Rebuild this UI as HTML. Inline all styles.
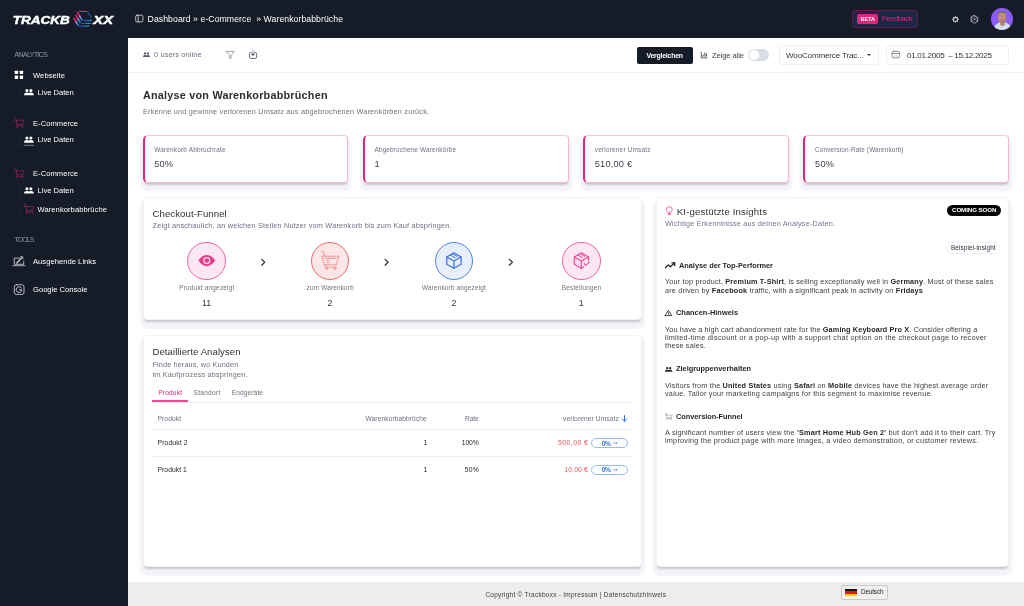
<!DOCTYPE html>
<html lang="de">
<head>
<meta charset="utf-8">
<title>Trackboxx</title>
<style>
*{box-sizing:border-box;margin:0;padding:0}
html,body{width:1024px;height:606px;overflow:hidden;background:#fff;font-family:"Liberation Sans",sans-serif;color:#2b2f3a}
body{position:relative}
.a{position:absolute}
.t{position:absolute;white-space:pre;line-height:1}
.t b{font-weight:700;color:#1f2329}
#top{left:0;top:0;width:1024px;height:38px;background:#161b28}
#side{left:0;top:0;width:127.5px;height:606px;background:#161b28}
#toolbar{left:127.5px;top:38px;width:896.5px;height:35px;background:#fff;border-bottom:1px solid #f0f2f5}
#footer{left:127.5px;top:582px;width:896.5px;height:24px;background:#ededed}
.stat{top:135px;width:205.75px;height:47.6px;background:#fff;border:1px solid #f8b3d3;border-top-color:#fac6de;border-left:2.5px solid #e0267a;border-radius:5px 4px 4px 5px;box-shadow:0 2.2px 2.2px -1px rgba(15,23,42,.2),0 5.5px 2px 2.4px rgba(230,234,241,.52)}
.card{background:#fff;border:1px solid #f1f3f6;border-radius:4.5px;box-shadow:0 2.2px 2.2px -1px rgba(15,23,42,.2),0 5.5px 2px 2.6px rgba(230,234,241,.52)}
.circ{width:38.4px;height:38.4px;border-radius:50%;top:241.75px}
.hl{height:1px;background:#e9ecf0}
.box{border:1px solid #eef0f4;border-radius:2.5px;background:#fff;top:45px;height:19.5px}
svg{position:absolute;overflow:visible}
</style>
</head>
<body>
<div id="root" style="position:absolute;left:0;top:0;width:1024px;height:606px;will-change:transform">
<div class="a" id="top"></div>
<div class="a" id="side"></div>
<div class="a" id="toolbar"></div>
<div class="a" id="footer"></div>

<!-- top bar widgets -->
<div class="a" style="left:852.25px;top:10px;width:65.75px;height:17.5px;border:1px solid #5c1d4a;border-radius:2.5px;background:#1d2644"></div>
<div class="a" style="left:857.3px;top:14px;width:20.7px;height:9.8px;border-radius:2px;background:#e0267a"></div>
<div class="a" style="left:991.4px;top:8.1px;width:21.6px;height:21.6px;border-radius:50%;background:#8b5cf6;overflow:hidden">
  <div class="a" style="left:2.2px;top:14.4px;width:17.4px;height:12px;border-radius:50% 50% 0 0/60% 60% 0 0;background:#d3deee"></div>
  <div class="a" style="left:8.6px;top:12px;width:4.6px;height:6px;background:#b98670;border-radius:0 0 50% 50%"></div>
  <div class="a" style="left:6.7px;top:3.4px;width:8.4px;height:5px;border-radius:50% 50% 20% 20%;background:#7d6f68"></div>
  <div class="a" style="left:7px;top:5.1px;width:7.8px;height:10px;border-radius:40% 40% 48% 48%;background:#c48e78"></div>
  <div class="a" style="left:8.2px;top:11.4px;width:5.4px;height:3.4px;border-radius:40%;background:#a9796a;opacity:.7"></div>
</div>

<!-- toolbar widgets -->
<div class="a" style="left:636.75px;top:46.5px;width:56.25px;height:17px;border-radius:2px;background:#161b28"></div>
<div class="a" style="left:748px;top:49px;width:21px;height:11.75px;border-radius:6px;background:#d9dde5"></div>
<div class="a" style="left:749px;top:50px;width:9.75px;height:9.75px;border-radius:50%;background:#fff"></div>
<div class="a box" style="left:778.5px;width:100.25px"></div>
<div class="a box" style="left:886px;width:122.75px"></div>
<div class="a" style="left:866.5px;top:53.9px;width:0;height:0;border-left:2.35px solid transparent;border-right:2.35px solid transparent;border-top:2.8px solid #30343c"></div>

<!-- stat cards -->
<div class="a stat" style="left:142.5px"></div>
<div class="a stat" style="left:362.75px"></div>
<div class="a stat" style="left:583px;"></div>
<div class="a stat" style="left:803.25px"></div>

<!-- big cards -->
<div class="a card" style="left:143px;top:197px;width:498.75px;height:123px"></div>
<div class="a card" style="left:143px;top:335px;width:498.75px;height:232px"></div>
<div class="a card" style="left:656.4px;top:197px;width:352.6px;height:370px"></div>

<!-- funnel circles -->
<div class="a circ" style="left:187.3px;background:#fce7f3;border:1.35px solid #f062a8"></div>
<div class="a circ" style="left:311px;background:#fde6e7;border:1.35px solid #ec6b6b"></div>
<div class="a circ" style="left:435px;background:#e8effc;border:1.35px solid #4f82ea"></div>
<div class="a circ" style="left:562.25px;background:#fce7f3;border:1.35px solid #f062a8"></div>

<!-- table lines -->
<div class="a hl" style="left:152.5px;top:402px;width:479.25px"></div>
<div class="a" style="left:152px;top:400px;width:36px;height:2px;background:#ea4a94"></div>
<div class="a hl" style="left:152.5px;top:429px;width:479.25px"></div>
<div class="a hl" style="left:152.5px;top:456px;width:479.25px"></div>
<div class="a" style="left:591px;top:438px;width:36.5px;height:10.4px;border:1px solid #94bdf2;border-radius:5.5px;background:#fdfeff"></div>
<div class="a" style="left:591px;top:465px;width:36.5px;height:10.4px;border:1px solid #94bdf2;border-radius:5.5px;background:#fdfeff"></div>

<!-- insights badges -->
<div class="a" style="left:947.25px;top:205px;width:53.75px;height:10.75px;border-radius:5.5px;background:#050505"></div>
<div class="a" style="left:946.4px;top:242px;width:54.3px;height:11.5px;border-radius:6px;border:1px solid #edf0f4;background:#fff"></div>

<!-- footer language -->
<div class="a" style="left:841.25px;top:585px;width:46.25px;height:14.5px;border:1px solid #c9c9c9;border-radius:2px;background:#f1f1f1"></div>
<div class="a" style="left:845.25px;top:588.75px;width:11.5px;height:7.25px;background:linear-gradient(#111 0 33.3%,#dd1c1c 33.3% 66.6%,#ffce00 66.6% 100%)"></div>

<!-- sidebar tree lines -->
<div class="a" style="left:18.5px;top:85px;width:1px;height:14px;background:#1b2131"></div>
<div class="a" style="left:18.5px;top:133px;width:1px;height:14px;background:#1b2131"></div>
<div class="a" style="left:18.5px;top:183px;width:1px;height:34px;background:#1b2131"></div>

<svg width="1024" height="606" viewBox="0 0 1024 606" style="left:0;top:0" fill="none" stroke-linecap="round" stroke-linejoin="round">
<defs>
  <linearGradient id="gs" x1="0" y1="0" x2="0.5" y2="1"><stop offset="0" stop-color="#ec1f80"/><stop offset=".45" stop-color="#e0267a"/><stop offset=".62" stop-color="#b9a3c7"/><stop offset="1" stop-color="#1d7fd6"/></linearGradient>
  <linearGradient id="gh" x1="0" y1="0" x2="1" y2="0"><stop offset="0" stop-color="#1b3f86"/><stop offset=".6" stop-color="#1f6fc9"/><stop offset="1" stop-color="#19a7ee"/></linearGradient>
  <g id="ppl"><circle cx="2.9" cy="1.55" r="1.55"/><circle cx="6.9" cy="1.55" r="1.55"/><path d="M0,6.3 C0,4.4 1.2,3.7 2.9,3.7 C4.1,3.7 4.7,4 4.9,4.3 C5.2,4 5.7,3.7 6.9,3.7 C8.6,3.7 9.8,4.4 9.8,6.3 Z"/></g>
  <g id="cart"><path d="M0.1,0.5 H1.6 L2.4,3 M0.5,3 H10.1 L8.7,7 H2.7 L2.4,3 M3.1,7 L2.4,10.3 M8.3,7 L8.9,10.3 M2.8,8.7 H8.6"/></g>
</defs>
<!-- logo cube -->
<g stroke-linecap="butt">
<line x1="78.9" y1="11.4" x2="86.9" y2="11.4" stroke="#e0267a" stroke-width="1.2"/>
<line x1="87.3" y1="11.5" x2="91.4" y2="17.6" stroke="#1f5cab" stroke-width="1.1"/>
<line x1="77.2" y1="12" x2="82.4" y2="20.6" stroke="url(#gs)" stroke-width="1.6"/>
<line x1="75.5" y1="14.8" x2="80.4" y2="22.9" stroke="url(#gs)" stroke-width="1.6"/>
<line x1="73.8" y1="17.8" x2="78.6" y2="26" stroke="url(#gs)" stroke-width="1.6"/>
<line x1="82.6" y1="20.4" x2="91.8" y2="20.401" stroke="url(#gh)" stroke-width="1.3"/>
<line x1="80.6" y1="23.3" x2="90.7" y2="23.301" stroke="url(#gh)" stroke-width="1.2"/>
<line x1="78.7" y1="26.2" x2="89" y2="26.201" stroke="url(#gh)" stroke-width="1.2"/>
</g>
<text x="12.7" y="23.8" fill="#fff" stroke="#fff" stroke-width=".45" font-family="'Liberation Sans',sans-serif" font-weight="700" font-style="italic" font-size="10.6" textLength="57" lengthAdjust="spacingAndGlyphs">TRACKB</text>
<text x="93.3" y="23.8" fill="#fff" stroke="#fff" stroke-width=".45" font-family="'Liberation Sans',sans-serif" font-weight="700" font-style="italic" font-size="10.6" textLength="19.7" lengthAdjust="spacingAndGlyphs">XX</text>

<!-- sidebar icons -->
<g fill="#fff" stroke="none">
<rect x="14.7" y="70.8" width="3.4" height="3.3" rx=".4"/><rect x="19.75" y="70.8" width="3.4" height="3.3" rx=".4"/>
<rect x="14.7" y="75.6" width="3.4" height="3.3" rx=".4"/><rect x="19.75" y="75.6" width="3.4" height="3.3" rx=".4"/>
<use href="#ppl" x="24" y="88.9"/><use href="#ppl" x="24" y="136.4"/><use href="#ppl" x="24" y="187.2"/>
</g>
<line x1="24" y1="145.3" x2="33.7" y2="145.3" stroke="#9197a5" stroke-width=".8"/>
<use href="#cart" x="14" y="117.3" stroke="#85215b" stroke-width=".75"/>
<use href="#cart" x="14" y="167.8" stroke="#85215b" stroke-width=".75"/>
<use href="#cart" x="23.8" y="203.6" stroke="#8f2463" stroke-width=".75" transform="translate(0,0)"/>
<!-- ausgehende links -->
<g stroke="#bfc3cd" stroke-width=".9">
<path d="M19.6,258.1 H14.3 V264.3 H23.7 V261.2"/><path d="M12.8,265.7 H24.9"/>
<path d="M16.8,263 L21.6,257.9" stroke-width="1.35" stroke="#cfd2da"/><path d="M20.6,256.7 H22.8 V258.9" stroke-width=".8" stroke="#d8dbe2"/>
</g>
<!-- google console -->
<rect x="14.3" y="284.7" width="9.7" height="9.8" rx="2.2" stroke="#bfc3cd" stroke-width=".9"/>
<path d="M21.4,287.9 A2.9,2.9 0 1 0 21.95,289.9 H19.3" stroke="#c9ccd5" stroke-width=".95"/>

<!-- topbar icons -->
<rect x="135.7" y="15.2" width="7.2" height="6.7" rx="1.2" stroke="#dfe2e8" stroke-width=".8"/>
<line x1="138.2" y1="15.3" x2="138.2" y2="21.8" stroke="#dfe2e8" stroke-width=".8"/>
<polygon points="955.50,15.70 956.40,17.23 958.12,16.78 957.67,18.50 959.20,19.40 957.67,20.30 958.12,22.02 956.40,21.57 955.50,23.10 954.60,21.57 952.88,22.02 953.33,20.30 951.80,19.40 953.33,18.50 952.88,16.78 954.60,17.23" fill="#d4d7de" stroke="none"/>
<circle cx="955.5" cy="19.4" r="1.5" fill="#161b28" stroke="none"/>
<g stroke="#cfd3db" stroke-width=".8">
<path d="M974.4,15.6 L977.7,17.5 V21.3 L974.4,23.2 L971.1,21.3 V17.5 Z"/>
<path d="M974.4,15.6 V19.4 L977.7,21.3 M974.4,19.4 L971.1,21.3 M971.1,17.5 L974.4,19.4 L977.7,17.5" stroke-width=".5" opacity=".8"/>
</g>

<!-- toolbar icons -->
<use href="#ppl" fill="#565c6c" stroke="none" transform="translate(143,52.2) scale(.71,.78)"/>
<path d="M226.2,51.4 H234.2 L231.2,55.2 V58.2 H229.4 V55.2 Z" stroke="#93969e" stroke-width=".85"/>
<g stroke="#555b69" stroke-width=".85"><path d="M251.2,52.4 H250.9 A1.5,1.5 0 0 0 249.4,53.9 V57 A1.5,1.5 0 0 0 250.9,58.5 H255.1 A1.5,1.5 0 0 0 256.6,57 V53.9 A1.5,1.5 0 0 0 255.1,52.4 H254.8"/>
<path d="M253,49.9 V54.6" stroke="#8b94a6"/><path d="M251.6,54.2 L253,55.7 L254.4,54.2 Z" fill="#3d4250" stroke="#3d4250" stroke-width=".5"/></g>
<g stroke="#4a4f5b" stroke-width=".9" stroke-linecap="butt"><path d="M701.3,51.8 V57.9 H707.2"/><path d="M703.1,54.6 V56.6 M704.9,52.6 V56.6 M706.6,53.6 V56.6" stroke-width="1"/></g>
<g stroke="#7a808d" stroke-width=".85"><rect x="892" y="51.3" width="7.6" height="6.6" rx="1.5"/><path d="M892,53.5 H899.6"/><path d="M894.9,55 V56.9 M896.8,55 V56.9" stroke-width=".6" opacity=".75"/></g>

<!-- funnel icons -->
<path d="M198.3,260.6 C201,256.6 204,255.1 206.8,255.1 C209.6,255.1 212.6,256.6 215.3,260.6 C212.6,264.7 209.6,266.2 206.8,266.2 C204,266.2 201,264.7 198.3,260.6 Z" fill="#e83e8c" stroke="none"/>
<circle cx="206.8" cy="260.6" r="2.95" stroke="#fde6f2" stroke-width="1.15" fill="#e83e8c"/>
<g stroke="#2a2d33" stroke-width="1.25"><path d="M261.6,259.4 L264.7,262.3 L261.6,265.2"/><path d="M385.1,259.4 L388.2,262.3 L385.1,265.2"/><path d="M509.3,259.4 L512.4,262.3 L509.3,265.2"/></g>
<g stroke="#ea7d7d" stroke-width=".8">
<path d="M321.6,251.8 H323.3 Q324.2,251.8 324.2,252.8 V256.2"/>
<path d="M322.2,256.2 H339 L336.3,264.9 H324.7 Z"/>
<path d="M325.3,258.3 H336.2 M326.8,260.4 H328.6 M327.2,262.3 H329"/>
<path d="M324.9,264.9 V267.2 H336.2" stroke-width=".7"/>
<circle cx="326.6" cy="268.5" r="1.1"/><circle cx="334.8" cy="268.5" r="1.1"/>
</g>
<g stroke="#3f73e8" stroke-width="1.25">
<path d="M453.9,252.8 L461.1,257 V264.2 L453.9,268.3 L446.8,264.2 V257 Z"/>
<path d="M446.8,257 L453.9,261 L461.1,257 M453.9,261 V268.3"/>
<path d="M450.3,255 L455,257.7 M452.5,253.7 L457.2,256.4" stroke-width="1"/>
</g>
<g stroke="#ec4a98" stroke-width="1.2">
<path d="M588.5,260.3 V257 L581.3,252.8 L574.3,257 V264.2 L581.3,268.3 L583.4,267.1"/>
<path d="M574.3,257 L581.3,261 L588.5,257 M581.3,261 V268.3"/>
<path d="M577.8,255 L582.5,257.7 M580,253.7 L584.7,256.4" stroke-width=".95"/>
<path d="M584.2,263.7 L585.8,265.4 L589.3,261.9" stroke-width="1.1"/>
</g>

<!-- insights icons -->
<g stroke="#f0549d" stroke-width=".9"><path d="M668.1,213 C668.1,211.9 666.4,211.3 666.4,209.6 A2.9,2.9 0 0 1 672.2,209.6 C672.2,211.3 670.5,211.9 670.5,213 Z"/><path d="M668.3,214.6 H670.3"/><path d="M669.3,211 V213" stroke-width=".6"/></g>
<g stroke="#1f2329" stroke-width="1.3"><path d="M665.4,267.8 L668.4,264.9 L670.4,266.8 L674.4,263"/><path d="M671.9,262.8 H674.7 V265.5"/></g>
<g stroke="#24282f" stroke-width=".85"><path d="M668.6,310.6 L671.9,315.6 H665.3 Z"/><path d="M668.6,312.3 V313.7 M668.6,314.6 V314.7" stroke-width=".75"/></g>
<use href="#ppl" fill="#24282f" stroke="none" transform="translate(665,367) scale(.75,.75)"/>
<use href="#cart" stroke="#8f949e" stroke-width=".8" transform="translate(665,413) scale(.72,.66)"/>
<g stroke="#2f6fe0" stroke-width="1"><path d="M624.5,415.6 V421.2 M622.3,419 L624.5,421.3 L626.7,419"/></g>
<g stroke="#5f93e6" stroke-width=".65"><path d="M613.4,443.1 H617.1 M616,442.1 L617.2,443.1 L616,444.1"/><path d="M613.4,469.9 H617.1 M616,468.9 L617.2,469.9 L616,470.9"/></g>
</svg>

<div class="t" style="left:147.60px;top:14.64px;font-size:8.7px;color:#ffffff;letter-spacing:0.061px;">Dashboard » e-Commerce&nbsp; » Warenkorbabbrüche</div>
<div class="t" style="left:860.60px;top:16.66px;font-size:5.6px;color:#ffffff;font-weight:700;letter-spacing:-0.138px;">BETA</div>
<div class="t" style="left:882.00px;top:14.85px;font-size:7.5px;color:#e0267a;letter-spacing:-0.348px;">Feedback</div>
<div class="t" style="left:14.25px;top:51.44px;font-size:7.4px;color:#8b92a3;letter-spacing:-0.848px;">ANALYTICS</div>
<div class="t" style="left:33.00px;top:72.17px;font-size:7.6px;color:#ffffff;letter-spacing:0.067px;">Webseite</div>
<div class="t" style="left:37.50px;top:89.27px;font-size:7.6px;color:#ffffff;letter-spacing:-0.007px;">Live Daten</div>
<div class="t" style="left:33.00px;top:120.27px;font-size:7.6px;color:#ffffff;letter-spacing:0.030px;">E-Commerce</div>
<div class="t" style="left:37.50px;top:135.77px;font-size:7.6px;color:#ffffff;letter-spacing:-0.007px;">Live Daten</div>
<div class="t" style="left:33.00px;top:169.77px;font-size:7.6px;color:#ffffff;letter-spacing:0.030px;">E-Commerce</div>
<div class="t" style="left:37.50px;top:187.37px;font-size:7.6px;color:#ffffff;letter-spacing:-0.007px;">Live Daten</div>
<div class="t" style="left:37.50px;top:206.47px;font-size:7.6px;color:#ffffff;letter-spacing:0.061px;">Warenkorbabbrüche</div>
<div class="t" style="left:14.25px;top:235.74px;font-size:7.4px;color:#8b92a3;letter-spacing:-1.105px;">TOOLS</div>
<div class="t" style="left:33.00px;top:258.07px;font-size:7.6px;color:#ffffff;letter-spacing:0.033px;">Ausgehende Links</div>
<div class="t" style="left:33.00px;top:286.47px;font-size:7.6px;color:#ffffff;">Google Console</div>
<div class="t" style="left:154.00px;top:50.97px;font-size:7.6px;color:#6b7280;letter-spacing:0.036px;">0 users online</div>
<div class="t" style="left:646.50px;top:52.76px;font-size:6.9px;color:#ffffff;font-weight:700;letter-spacing:-0.219px;">Vergleichen</div>
<div class="t" style="left:712.00px;top:52.27px;font-size:7.6px;color:#3f4450;letter-spacing:-0.104px;">Zeige alle</div>
<div class="t" style="left:786.00px;top:51.74px;font-size:8.1px;color:#30343c;letter-spacing:-0.184px;">WooCommerce Trac...</div>
<div class="t" style="left:907.00px;top:51.74px;font-size:8.1px;color:#30343c;letter-spacing:-0.316px;">01.01.2005&nbsp; – 15.12.2025</div>
<div class="t" style="left:143.00px;top:90.26px;font-size:10.8px;color:#2b2e35;font-weight:700;letter-spacing:0.231px;">Analyse von Warenkorbabbrüchen</div>
<div class="t" style="left:143.00px;top:107.82px;font-size:7.3px;color:#6b7280;letter-spacing:0.196px;">Erkenne und gewinne verlorenen Umsatz aus abgebrochenen Warenkörben zurück.</div>
<div class="t" style="left:154.25px;top:147.28px;font-size:6.4px;color:#6b7280;letter-spacing:0.199px;">Warenkorb Abbruchrate</div>
<div class="t" style="left:154.25px;top:160.21px;font-size:9.2px;color:#3a3e47;letter-spacing:0.180px;">50%</div>
<div class="t" style="left:374.50px;top:147.28px;font-size:6.4px;color:#6b7280;letter-spacing:0.163px;">Abgebrochene Warenkörbe</div>
<div class="t" style="left:374.50px;top:160.21px;font-size:9.2px;color:#3a3e47;">1</div>
<div class="t" style="left:594.75px;top:147.28px;font-size:6.4px;color:#6b7280;letter-spacing:0.221px;">verlorener Umsatz</div>
<div class="t" style="left:594.75px;top:160.21px;font-size:9.2px;color:#3a3e47;letter-spacing:0.212px;">510,00 €</div>
<div class="t" style="left:815.00px;top:147.28px;font-size:6.4px;color:#6b7280;letter-spacing:0.134px;">Conversion-Rate (Warenkorb)</div>
<div class="t" style="left:815.00px;top:160.21px;font-size:9.2px;color:#3a3e47;letter-spacing:0.305px;">50%</div>
<div class="t" style="left:152.50px;top:208.62px;font-size:9.6px;color:#30343c;letter-spacing:0.085px;">Checkout-Funnel</div>
<div class="t" style="left:152.50px;top:221.82px;font-size:7.3px;color:#6b7280;letter-spacing:0.192px;">Zeigt anschaulich, an welchen Stellen Nutzer vom Warenkorb bis zum Kauf abspringen.</div>
<div class="t" style="left:179.25px;top:284.58px;font-size:6.4px;color:#6b7280;letter-spacing:0.218px;">Produkt angezeigt</div>
<div class="t" style="left:306.50px;top:284.58px;font-size:6.4px;color:#6b7280;letter-spacing:0.198px;">zum Warenkorb</div>
<div class="t" style="left:422.00px;top:284.58px;font-size:6.4px;color:#6b7280;letter-spacing:0.180px;">Warenkorb angezeigt</div>
<div class="t" style="left:561.75px;top:284.58px;font-size:6.4px;color:#6b7280;letter-spacing:0.209px;">Bestellungen</div>
<div class="t" style="left:201.93px;top:299.30px;font-size:8.8px;color:#30343c;">11</div>
<div class="t" style="left:327.55px;top:299.30px;font-size:8.8px;color:#30343c;">2</div>
<div class="t" style="left:451.55px;top:299.30px;font-size:8.8px;color:#30343c;">2</div>
<div class="t" style="left:578.80px;top:299.30px;font-size:8.8px;color:#30343c;">1</div>
<div class="t" style="left:152.50px;top:346.87px;font-size:9.6px;color:#30343c;letter-spacing:0.053px;">Detaillierte Analysen</div>
<div class="t" style="left:152.50px;top:360.57px;font-size:7.3px;color:#6b7280;letter-spacing:0.117px;">Finde heraus, wo Kunden</div>
<div class="t" style="left:152.50px;top:370.82px;font-size:7.3px;color:#6b7280;letter-spacing:0.182px;">im Kaufprozess abspringen.</div>
<div class="t" style="left:158.25px;top:390.16px;font-size:6.6px;color:#e0267a;letter-spacing:0.169px;">Produkt</div>
<div class="t" style="left:193.50px;top:390.16px;font-size:6.6px;color:#6b7280;letter-spacing:0.259px;">Standort</div>
<div class="t" style="left:231.75px;top:390.16px;font-size:6.6px;color:#6b7280;letter-spacing:0.102px;">Endgeräte</div>
<div class="t" style="left:157.50px;top:415.91px;font-size:6.6px;color:#6b7280;letter-spacing:0.128px;">Produkt</div>
<div class="t" style="left:365.50px;top:415.91px;font-size:6.6px;color:#6b7280;letter-spacing:0.109px;">Warenkorbabbrüche</div>
<div class="t" style="left:465.00px;top:415.91px;font-size:6.6px;color:#6b7280;letter-spacing:-0.062px;">Rate</div>
<div class="t" style="left:563.00px;top:415.91px;font-size:6.6px;color:#6b7280;letter-spacing:0.117px;">verlorener Umsatz</div>
<div class="t" style="left:157.50px;top:440.24px;font-size:6.8px;color:#1f2329;letter-spacing:0.113px;">Produkt 2</div>
<div class="t" style="left:423.41px;top:440.24px;font-size:6.8px;color:#1f2329;">1</div>
<div class="t" style="left:461.75px;top:440.24px;font-size:6.8px;color:#1f2329;letter-spacing:-0.130px;">100%</div>
<div class="t" style="left:558.00px;top:439.07px;font-size:7px;color:#e6555a;letter-spacing:0.393px;">500,00 €</div>
<div class="t" style="left:601.80px;top:441.01px;font-size:6.6px;color:#3270da;font-weight:700;letter-spacing:-0.431px;">0%</div>
<div class="t" style="left:157.50px;top:466.99px;font-size:6.8px;color:#1f2329;letter-spacing:0.020px;">Produkt 1</div>
<div class="t" style="left:423.41px;top:466.99px;font-size:6.8px;color:#1f2329;">1</div>
<div class="t" style="left:464.75px;top:466.99px;font-size:6.8px;color:#1f2329;letter-spacing:0.195px;">50%</div>
<div class="t" style="left:564.20px;top:465.82px;font-size:7px;color:#e6555a;letter-spacing:0.073px;">10,00 €</div>
<div class="t" style="left:601.80px;top:466.81px;font-size:6.6px;color:#3270da;font-weight:700;letter-spacing:-0.431px;">0%</div>
<div class="t" style="left:676.75px;top:206.87px;font-size:9.6px;color:#30343c;letter-spacing:0.166px;">KI-gestützte Insights</div>
<div class="t" style="left:665.00px;top:220.32px;font-size:7.3px;color:#6b7a8f;letter-spacing:0.186px;">Wichtige Erkenntnisse aus deinen Analyse-Daten.</div>
<div class="t" style="left:952.00px;top:207.05px;font-size:6.2px;color:#ffffff;font-weight:700;letter-spacing:-0.089px;">COMING SOON</div>
<div class="t" style="left:951.00px;top:245.18px;font-size:6.4px;color:#2b3040;letter-spacing:0.084px;">Beispiel-Insight</div>
<div class="t" style="left:679.00px;top:262.24px;font-size:7.4px;color:#1f2329;font-weight:700;letter-spacing:-0.031px;">Analyse der Top-Performer</div>
<div class="t" style="left:665.00px;top:278.07px;font-size:7.3px;color:#3c4049;letter-spacing:0.163px;">Your top product, <b>Premium T-Shirt</b>, is selling exceptionally well in <b>Germany</b>. Most of these sales</div>
<div class="t" style="left:665.00px;top:287.32px;font-size:7.3px;color:#3c4049;letter-spacing:0.184px;">are driven by <b>Facebook</b> traffic, with a significant peak in activity on <b>Fridays</b></div>
<div class="t" style="left:676.00px;top:308.99px;font-size:7.4px;color:#1f2329;font-weight:700;letter-spacing:0.028px;">Chancen-Hinweis</div>
<div class="t" style="left:665.00px;top:325.57px;font-size:7.3px;color:#3c4049;letter-spacing:0.120px;">You have a high cart abandonment rate for the <b>Gaming Keyboard Pro X</b>. Consider offering a</div>
<div class="t" style="left:665.00px;top:333.82px;font-size:7.3px;color:#3c4049;letter-spacing:0.265px;">limited-time discount or a pop-up with a support chat option on the checkout page to recover</div>
<div class="t" style="left:665.00px;top:342.07px;font-size:7.3px;color:#3c4049;letter-spacing:0.163px;">these sales.</div>
<div class="t" style="left:676.00px;top:364.99px;font-size:7.4px;color:#1f2329;font-weight:700;letter-spacing:-0.008px;">Zielgruppenverhalten</div>
<div class="t" style="left:665.00px;top:381.57px;font-size:7.3px;color:#3c4049;letter-spacing:0.163px;">Visitors from the <b>United States</b> using <b>Safari</b> on <b>Mobile</b> devices have the highest average order</div>
<div class="t" style="left:665.00px;top:389.82px;font-size:7.3px;color:#3c4049;letter-spacing:0.213px;">value. Tailor your marketing campaigns for this segment to maximise revenue.</div>
<div class="t" style="left:676.00px;top:412.74px;font-size:7.4px;color:#1f2329;font-weight:700;letter-spacing:-0.053px;">Conversion-Funnel</div>
<div class="t" style="left:665.00px;top:428.82px;font-size:7.3px;color:#3c4049;letter-spacing:0.192px;">A significant number of users view the <b>'Smart Home Hub Gen 2'</b> but don't add it to their cart. Try</div>
<div class="t" style="left:665.00px;top:437.07px;font-size:7.3px;color:#3c4049;letter-spacing:0.211px;">improving the product page with more images, a video demonstration, or customer reviews.</div>
<div class="t" style="left:485.40px;top:592.00px;font-size:6.5px;color:#3a3d44;letter-spacing:0.259px;">Copyright © Trackboxx - Impressum | Datenschutzhinweis</div>
<div class="t" style="left:861.00px;top:588.58px;font-size:6.4px;color:#222;letter-spacing:-0.159px;">Deutsch</div>
</div>
</body>
</html>
